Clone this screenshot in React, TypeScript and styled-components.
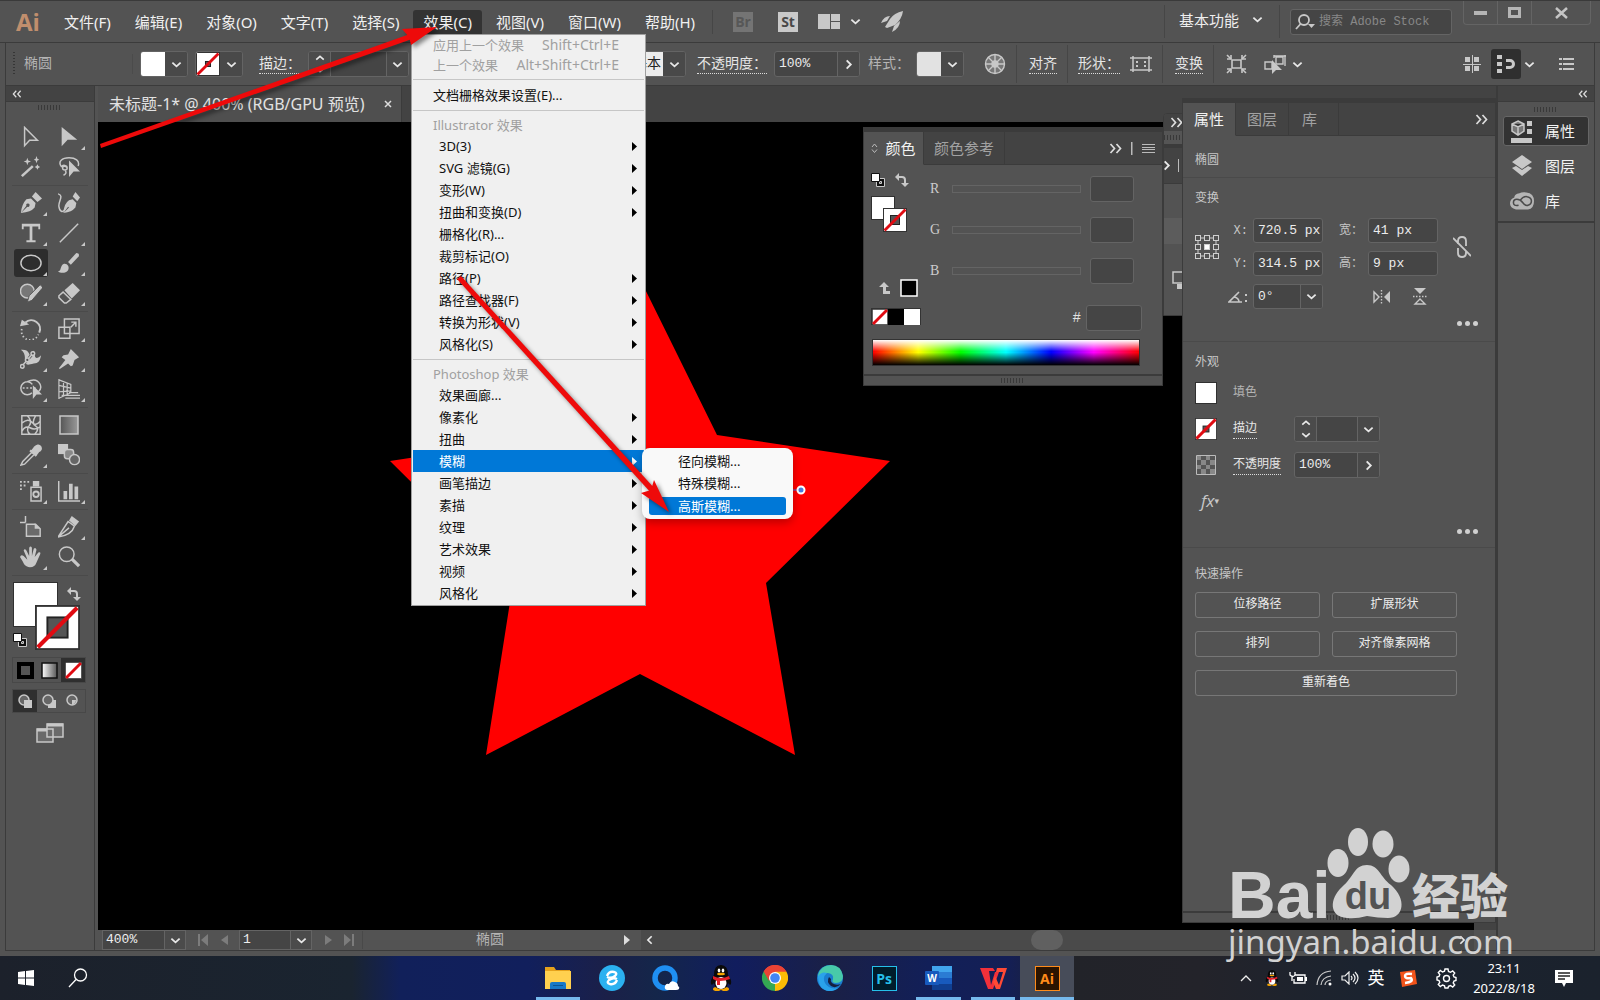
import React from "react";
import styled, { createGlobalStyle, css } from "styled-components";

const ui = `"Noto Sans", "Noto Sans CJK SC", sans-serif`;
const song = `"Liberation Mono", "Noto Sans CJK SC", monospace`;
const c = {
  panel: "#535353",
  dark: "#434343",
  field: "#454545",
  line: "#3b3b3b",
  edge: "#646464",
  icon: "#c8c8c8",
  text: "#e2e2e2",
  dim: "#b4b4b4",
  red: "#e00b12",
};

const Global = createGlobalStyle`
  *, *::before, *::after { box-sizing: border-box; }
  html, body { margin: 0; background: #000; overflow: hidden; }
  button, input, select { font: inherit; color: inherit; margin: 0; padding: 0; border: 0; background: none; border-radius: 0; outline: 0; }
  button { display: inline-flex; align-items: center; justify-content: center; flex: none; }
  svg { display: block; flex: none; }
`;

const Desktop = styled.div`
  position: relative;
  display: flex;
  flex-direction: column;
  height: 100vh;
  overflow: hidden;
  background: ${c.panel};
  color: ${c.text};
  font: 13px/20px ${ui};
`;

/* ---------- shared pieces ---------- */
const Chevron = ({ dir = "down", size = 11 }: { dir?: string; size?: number }) => {
  const d: Record<string, string> = {
    down: "M1.5 4l4.5 4 4.5-4",
    up: "M1.5 8L6 4l4.5 4",
    right: "M4 1.5L8.5 6 4 10.5",
    left: "M8 1.5L3.5 6 8 10.5",
  };
  return (
    <svg width={size} height={size} viewBox="0 0 12 12" fill="none" stroke="#e8e8e8" strokeWidth="2">
      <path d={d[dir]} />
    </svg>
  );
};
const Double = ({ left }: { left?: boolean }) => (
  <svg width={left ? 10 : 13} height={left ? 8 : 11} viewBox="0 0 13 11" fill="none" stroke="#ddd" strokeWidth="1.7">
    <path d={left ? "M5.5 1L1.5 5.500l4 4.500M11.500 1l-4 4.500 4 4.500" : "M1.500 1l4 4.500-4 4.500M7.500 1l4 4.500-4 4.500"} />
  </svg>
);
const Grip = styled.span`
  width: 24px;
  height: 5px;
  background: repeating-linear-gradient(90deg, #393939 0 1px, transparent 1px 3px);
`;
const Rule = styled.span<{ $h?: number }>`
  width: 1px;
  height: ${(p) => p.$h ?? 24}px;
  background: #464646;
  flex: none;
`;
const BarRule = styled(Rule)`
  height: 38px;
  margin-left: 10px;
`;
const Swatch = styled.button<{ $size: number; $fill?: string; $dark?: boolean }>`
  width: ${(p) => p.$size}px;
  height: ${(p) => p.$size}px;
  background: ${(p) => p.$fill ?? "#fff"};
  ${(p) => p.$dark && css`border: 1px solid #303030;`}
`;
const NoneMark = ({ size, hole = 0.25 }: { size: number; hole?: number }) => (
  <svg width={size} height={size} viewBox="0 0 24 24">
    <rect x="0.5" y="0.5" width="23" height="23" fill="#fff" stroke="#333" />
    {hole > 0 && <rect x={12 - 18 * hole} y={12 - 18 * hole} width={36 * hole} height={36 * hole} fill="#555" stroke="#222" />}
    <path d="M1.500 22.500l21-21" stroke={c.red} strokeWidth={Math.max(2.2, 70 / size)} />
  </svg>
);
const SwapIcon = () => (
  <svg width="14" height="14" viewBox="0 0 14 14" fill={c.icon}>
    <path d="M0 4l4-4v3h3q4 0 4 4v3h3l-4 4-4-4h3V7q0-2-2-2H4v3z" />
  </svg>
);
const DefaultIcon = () => (
  <svg width="14" height="14" viewBox="0 0 14 14">
    <path d="M5.500 5.500h8v8h-8z" fill="#111" stroke={c.icon} />
    <path d="M8.500 8.500h2v2h-2z" fill="#555" stroke="#ccc" />
    <path d="M.5.5h8v8h-8z" fill="#fff" stroke="#111" />
  </svg>
);

/* ---------- title bar ---------- */
const TitleBar = styled.header`
  display: flex;
  align-items: center;
  height: 43px;
  padding: 0 9px 0 16px;
  border-top: 1px solid #3a3a3a;
  border-bottom: 1px solid ${c.line};
  flex: none;
`;
const Logo = styled.span`
  width: 38px;
  font: bold 24px/40px "Open Sans", sans-serif;
  color: #c08e6d;
`;
const Menus = styled.nav`
  display: flex;
  gap: 4px;
`;
const MenuButton = styled.button<{ $on?: boolean }>`
  height: 24px;
  padding: 0 10px;
  font-size: 15px;
  color: #f0f0f0;
  border-radius: 3px 3px 0 0;
  background: ${(p) => (p.$on ? "#333" : "none")};
`;
const TopTools = styled.div`
  display: flex;
  align-items: center;
  padding-left: 7px;
`;
const AppBadge = styled.button<{ $dim?: boolean }>`
  width: 20px;
  height: 20px;
  margin-left: ${(p) => (p.$dim ? 20 : 25)}px;
  font: bold 14px/20px "Open Sans", sans-serif;
  background: ${(p) => (p.$dim ? "#747474" : "#c9c9c9")};
  color: ${(p) => (p.$dim ? "#575757" : "#484848")};
`;
const PlainButton = styled.button<{ $ml?: number }>`
  margin-left: ${(p) => p.$ml ?? 0}px;
`;
const TopRight = styled.div`
  display: flex;
  align-items: center;
  align-self: stretch;
  margin-left: auto;
`;
const Workspace = styled.button`
  gap: 13px;
  padding: 0 16px 4px 14px;
  font-size: 15px;
  color: #eee;
`;
const Search = styled.label`
  display: flex;
  align-items: center;
  gap: 4px;
  width: 162px;
  height: 26px;
  margin: 0 11px 0 10px;
  padding-left: 4px;
  background: #454545;
  border: 1px solid ${c.edge};
  border-radius: 3px;
  input { width: 130px; font: 12px/20px ${song}; }
  input::placeholder { color: #888; opacity: 1; }
`;
const WindowButtons = styled.div`
  display: flex;
  align-self: flex-start;
  height: 24px;
  border: 1px solid ${c.edge};
  border-top: 0;
  border-radius: 0 0 4px 4px;
  button { width: 34px; border-right: 1px solid ${c.edge}; }
  button:last-child { width: 58px; border: 0; }
`;

/* ---------- control bar ---------- */
const ControlBar = styled.div`
  display: flex;
  align-items: center;
  height: 43px;
  margin: 0 5px;
  padding: 2px 0 2px 7px;
  border-left: 1px solid ${c.line};
  border-right: 1px solid ${c.line};
  border-bottom: 1px solid ${c.line};
  font: 14px/20px ${song};
  flex: none;
`;
const BarGrip = styled.span`
  width: 2px;
  height: 24px;
  background: repeating-linear-gradient(#363636 0 1px, transparent 1px 3px);
`;
const ControlName = styled.span`
  flex: none;
  width: 118px;
  padding-left: 9px;
  color: ${c.dim};
  border-right: 1px solid #4b4b4b;
`;
const Group = styled.div<{ $ml?: number; $h?: number }>`
  display: flex;
  flex: none;
  align-items: stretch;
  height: ${(p) => p.$h ?? 26}px;
  margin-left: ${(p) => p.$ml ?? 0}px;
  border: 1px solid ${c.edge};
  border-radius: 3px;
  background: ${c.field};
  overflow: hidden;
`;
const DropButton = styled.button<{ $b?: boolean }>`
  width: 22px;
  background: #494949;
  ${(p) => p.$b && css`border-left: 1px solid ${c.edge};`}
`;
const Stepper = styled.span`
  display: flex;
  flex-direction: column;
  width: 22px;
  background: #4b4b4b;
  border-right: 1px solid ${c.edge};
  button { flex: 1; }
`;
const Field = styled.input<{ $w: number }>`
  width: ${(p) => p.$w}px;
  padding-left: 4px;
  font: 13px/20px ${song};
  color: #ececec;
`;
const Label = styled.label<{ $ml?: number; $link?: boolean }>`
  flex: none;
  margin-left: ${(p) => p.$ml ?? 0}px;
  line-height: 18px;
  color: ${(p) => (p.$link ? "#e6e6e6" : c.dim)};
  border-bottom: 1px ${(p) => (p.$link ? "dotted #dcdcdc" : "solid transparent")};
`;
const BrushSelect = styled.select`
  appearance: none;
  width: 248px;
  padding-right: 2px;
  background: #ececec;
  color: #222;
  text-align: right;
  text-align-last: right;
`;
const BarRight = styled.div`
  display: flex;
  align-items: center;
  margin-left: auto;
  padding-right: 20px;
`;
const SnapButton = styled.button`
  width: 30px;
  height: 30px;
  margin: 0 3px 0 10px;
  border-radius: 3px;
  background: #2f2f2f;
`;

/* ---------- main area ---------- */
const Main = styled.main`
  position: relative;
  display: flex;
  flex: 1;
  min-height: 0;
  margin: 0 5px 5px;
  border: 1px solid ${c.line};
  border-top: 0;
`;
const Toolbox = styled.aside`
  width: 89px;
  border-right: 1px solid ${c.line};
  display: flex;
  flex-direction: column;
  flex: none;
`;
const PanelHead = styled.div<{ $right?: boolean }>`
  display: flex;
  align-items: center;
  justify-content: ${(p) => (p.$right ? "flex-end" : "flex-start")};
  height: 16px;
  padding: 0 6px;
  background: ${c.dark};
  border-bottom: 1px solid ${c.line};
`;
const GripRow = styled.div<{ $h: number }>`
  display: flex;
  align-items: center;
  justify-content: center;
  height: ${(p) => p.$h}px;
`;
const DockGrip = styled(GripRow)`
  width: 96px;
`;
const ToolGroup = styled.div`
  display: grid;
  grid-template-columns: 38px 38px;
  grid-auto-rows: 30px;
  margin: 0 6px 2px;
  padding-bottom: 3px;
  border-bottom: 1px solid #4a4a4a;
`;
const Tool = styled.button<{ $on?: boolean; $more?: boolean }>`
  position: relative;
  margin: 1px 2px;
  border-radius: 3px;
  background: ${(p) => (p.$on ? "#2d2d2d" : "none")};
  ${(p) => p.$more && css`
    &::after {
      content: "";
      position: absolute;
      right: 1px;
      bottom: 1px;
      border-left: 4px solid transparent;
      border-bottom: 4px solid ${c.icon};
    }
  `}
`;
const FillStroke = styled.div`
  display: grid;
  grid-template-columns: 22px 22px 24px;
  grid-template-rows: 23px 23px 23px;
  margin: 4px 7px 6px;
  > .fill { grid-area: 1 / 1 / 3 / 3; }
  > .stroke { grid-area: 2 / 2 / 4 / 4; z-index: 1; place-self: start; }
  > .swap { grid-area: 1 / 3; place-self: center end; }
  > .mini { grid-area: 3 / 1; place-self: center start; }
`;
const ModeRow = styled.div<{ $h: number }>`
  display: flex;
  height: ${(p) => p.$h}px;
  width: 74px;
  margin: 0 0 6px 6px;
  border: 1px solid #484848;
  button { flex: 1; }
  button[aria-pressed="true"] { background: #2f2f2f; }
`;
const ScreenMode = styled.button`
  margin: 4px 0 0 30px;
  align-self: flex-start;
`;
const Center = styled.section`
  display: flex;
  flex-direction: column;
  flex: 1;
  min-width: 0;
  margin-left: 3px;
  background: ${c.dark};
`;
const Tabs = styled.div`
  display: flex;
  height: 36px;
`;
const DocTab = styled.div`
  display: flex;
  align-items: center;
  gap: 20px;
  width: 304px;
  padding-left: 11px;
  font-size: 16px;
  white-space: nowrap;
  background: #4f4f4f;
  border-right: 1px solid ${c.line};
`;
const Canvas = styled.div`
  flex: 1;
  min-height: 0;
  margin-right: 22px;
  background: #000;
  overflow: hidden;
`;
const Status = styled.footer`
  display: flex;
  align-items: center;
  height: 20px;
  padding-left: 4px;
  background: ${c.panel};
  font: 13px/18px ${song};
`;
const StatusSelect = styled.div<{ $w: number; $ml?: number; $mr: number }>`
  display: flex;
  align-items: center;
  width: ${(p) => p.$w}px;
  height: 20px;
  margin: 0 ${(p) => p.$mr}px 0 ${(p) => p.$ml ?? 0}px;
  background: ${c.field};
  border: 1px solid ${c.edge};
  select { appearance: none; flex: 1; padding-left: 3px; color: #eee; }
  > span { display: flex; width: 21px; height: 18px; align-items: center; justify-content: center; background: #4b4b4b; border-left: 1px solid ${c.edge}; }
`;
const StatusText = styled.span`
  flex: none;
  width: 255px;
  margin-left: 8px;
  border-left: 1px solid #494949;
  text-align: center;
  font-size: 14px;
  color: ${c.dim};
`;
const Scroll = styled.div`
  display: flex;
  align-items: center;
  flex: 1;
  height: 20px;
  margin: 0 22px 0 10px;
  padding: 0 7px 0 4px;
  background: #4a4a4a;
`;
const Thumb = styled.span`
  width: 32px;
  height: 20px;
  margin: 0 auto 0 376px;
  border-radius: 10px;
  background: #606060;
`;
const Dock = styled.aside`
  width: 98px;
  flex: none;
  border-left: 2px solid ${c.line};
`;
const DockItem = styled.button<{ $on?: boolean }>`
  display: flex;
  justify-content: flex-start;
  gap: 11px;
  width: 86px;
  height: 30px;
  margin: 0 0 5px 5px;
  padding-left: 6px;
  font-size: 15px;
  color: #f2f2f2;
  border-radius: 3px;
  border: 1px solid ${(p) => (p.$on ? "#666" : "transparent")};
  background: ${(p) => (p.$on ? "#333" : "none")};
`;
const DockList = styled.div`
  display: flex;
  flex-direction: column;
  align-items: flex-start;
  border-bottom: 2px solid ${c.line};
`;

/* ---------- floating panels ---------- */
const Floating = styled.section<{ $right: number; $top: number; $w: number; $bottom?: number }>`
  position: absolute;
  right: ${(p) => p.$right}px;
  top: ${(p) => p.$top}px;
  width: ${(p) => p.$w}px;
  ${(p) => p.$bottom !== undefined && css`bottom: ${p.$bottom}px;`}
  display: flex;
  flex-direction: column;
  background: ${c.panel};
  border: 1px solid ${c.line};
  border-top: 5px solid ${c.line};
`;
const TabStrip = styled.div`
  display: flex;
  align-items: center;
  height: 33px;
  background: ${c.dark};
  flex: none;
`;
const Tab = styled.button<{ $w: number; $on?: boolean }>`
  gap: 7px;
  width: ${(p) => p.$w}px;
  height: 33px;
  font-size: 15px;
  color: ${(p) => (p.$on ? "#f2f2f2" : "#a2a2a2")};
  background: ${(p) => (p.$on ? c.panel : c.dark)};
  border-right: 1px solid ${c.line};
  border-bottom: 1px solid ${(p) => (p.$on ? c.panel : c.line)};
`;
const LeftTab = styled(Tab)`
  justify-content: flex-start;
  padding-left: 13px;
`;
const TabEnd = styled.div`
  display: flex;
  flex: 1;
  align-self: stretch;
  align-items: center;
  justify-content: flex-end;
  gap: 9px;
  padding-right: 7px;
  border-bottom: 1px solid ${c.line};
`;
const PanelFoot = styled.div`
  display: flex;
  justify-content: center;
  align-items: center;
  height: 11px;
  margin-top: auto;
  border-top: 2px solid ${c.line};
`;
const Section = styled.div<{ $top?: number; $h?: number; $last?: boolean }>`
  padding: ${(p) => p.$top ?? 13}px 10px 0 12px;
  ${(p) => p.$h && css`height: ${p.$h}px;`}
  border-bottom: ${(p) => (p.$last ? 0 : 1)}px solid #4a4a4a;
  font: 12px/16px ${song};
  color: #c6c6c6;
`;
const SectionTitle = styled.h2`
  margin: 0;
  font: 12px/16px ${song};
  color: #c6c6c6;
`;
const TransformGrid = styled.div`
  display: grid;
  grid-template-columns: 24px 34px 70px 45px 70px 1fr;
  grid-template-rows: 25px 25px 25px;
  gap: 8px 0;
  align-items: center;
  margin: 11px 0 2px;
  > .ref { grid-area: 1 / 1 / 3 / 2; }
  > .chain { grid-area: 1 / 6 / 3 / 7; justify-self: center; }
  > label { justify-self: end; padding-right: 5px; white-space: nowrap; }
`;
const Flips = styled.div`
  display: flex;
  justify-content: space-between;
  padding: 0 11px 0 5px;
`;
const More = styled.button`
  display: flex;
  gap: 3px;
  margin-left: auto;
  padding: 0 7px 0 0;
  height: 24px;
  i { width: 5px; height: 5px; border-radius: 50%; background: #d0d0d0; }
`;
const LookRows = styled.div`
  padding-top: 4px;
`;
const LookRow = styled.div`
  display: grid;
  grid-template-columns: 38px 61px 86px;
  align-items: center;
  justify-items: start;
  height: 36px;
`;
const FxButton = styled.button`
  padding-left: 6px;
  font: italic 17px/20px "Open Sans", sans-serif;
  color: ${c.icon};
  small { font: 9px/20px "DejaVu Sans", sans-serif; align-self: flex-end; }
`;
const Quick = styled.div`
  display: grid;
  grid-template-columns: 125px 125px;
  gap: 13px 12px;
  margin-top: 9px;
`;
const QuickButton = styled.button<{ $wide?: boolean }>`
  height: 26px;
  grid-column: span ${(p) => (p.$wide ? 2 : 1)};
  border: 1px solid #777;
  border-radius: 3px;
  color: #ececec;
`;
const ColorBody = styled.div`
  display: flex;
  height: 165px;
`;
const ColorLeft = styled.div`
  display: flex;
  flex-direction: column;
  width: 57px;
  padding: 8px 0 0 7px;
`;
const ColorIcons = styled.div`
  display: flex;
  justify-content: space-between;
  width: 38px;
  margin-bottom: 9px;
`;
const MiniPair = styled.div`
  display: grid;
  grid-template-columns: 12px 12px 12px;
  grid-template-rows: 12px 12px 12px;
  > :first-child { grid-area: 1 / 1 / 3 / 3; }
  > :last-child { grid-area: 2 / 2 / 4 / 4; z-index: 1; }
`;
const LastColor = styled.div`
  display: flex;
  align-items: center;
  gap: 10px;
  margin: 47px 0 11px 8px;
`;
const Strip = styled.div`
  display: flex;
  width: 50px;
  height: 17px;
  border: 1px solid #333;
  align-items: center;
`;
const Channels = styled.div`
  flex: 1;
  padding-top: 3px;
`;
const Channel = styled.div`
  display: flex;
  align-items: center;
  height: 41px;
  padding-left: 9px;
  label { width: 22px; font: 14px/20px "Liberation Serif", serif; color: #ccc; }
  input[type="range"] { appearance: none; width: 129px; height: 8px; margin-right: 9px; border: 1px solid ${c.edge}; }
  input[type="range"]::-webkit-slider-thumb { appearance: none; width: 0; }
`;
const HexRow = styled.div`
  display: flex;
  align-items: center;
  justify-content: flex-end;
  gap: 5px;
  height: 41px;
  margin-top: 6px;
  padding-right: 20px;
  font: 14px/20px ${song};
`;
const Spectrum = styled.button`
  width: 268px;
  height: 27px;
  margin: 9px 0 8px 8px;
  border: 1px solid #333;
  background:
    linear-gradient(#fff 0%, rgba(255, 255, 255, 0) 45%, rgba(0, 0, 0, 0) 50%, #000 100%),
    linear-gradient(90deg, #f00, #ff0 17%, #0f0 33%, #0ff 50%, #00f 67%, #f0f 83%, #f00);
`;
const Sliver = styled.div`
  position: absolute;
  right: 410px;
  top: 27px;
  width: 21px;
  height: 203px;
  display: flex;
  flex-direction: column;
  overflow: hidden;
  background: ${c.panel};
  border: 1px solid ${c.line};
  border-radius: 4px 0 0 0;
`;
const SliverPart = styled.div<{ $h: number; $bg: string; $b?: number }>`
  display: flex;
  align-items: center;
  justify-content: flex-end;
  gap: 6px;
  height: ${(p) => p.$h}px;
  background: ${(p) => p.$bg};
  border-bottom: ${(p) => p.$b ?? 0}px solid ${c.line};
  flex: none;
`;

/* ---------- menus ---------- */
const Dropdown = styled.div`
  position: absolute;
  left: 411px;
  top: 34px;
  width: 235px;
  padding: 0 1px 1px;
  background: #f0f0f0;
  border: 1px solid #a0a0a0;
  color: #111;
  white-space: nowrap;
`;
const Item = styled.button<{ $h?: number; $pad?: number; $off?: boolean; $on?: boolean }>`
  display: flex;
  justify-content: flex-start;
  width: 100%;
  height: ${(p) => p.$h ?? 22}px;
  padding: 0 7px 0 ${(p) => p.$pad ?? 26}px;
  color: ${(p) => (p.$on ? "#fff" : p.$off ? "#a0a0a0" : "#111")};
  background: ${(p) => (p.$on ? "#0078d7" : "none")};
  svg { margin-left: auto; }
  kbd { margin-left: auto; padding-right: 18px; font: 14px/20px ${ui}; }
`;
const Sep = styled.div`
  height: 9px;
  padding: 4px 0;
  background: #c6c6c6 content-box;
`;
const Sub = styled.div`
  position: absolute;
  left: 642px;
  top: 448px;
  width: 151px;
  padding: 2px 7px 4px;
  background: #f9f9f9;
  border-radius: 8px;
  box-shadow: 0 4px 8px rgba(0, 0, 0, 0.25);
  color: #111;
`;
const SubItem = styled.button<{ $on?: boolean }>`
  display: flex;
  justify-content: flex-start;
  width: 100%;
  height: ${(p) => (p.$on ? 18 : 22)}px;
  margin-top: ${(p) => (p.$on ? 3 : 0)}px;
  padding-left: 29px;
  border-radius: 3px;
  color: ${(p) => (p.$on ? "#fff" : "#111")};
  background: ${(p) => (p.$on ? "#0078d7" : "none")};
`;
const Overlay = styled.svg`
  position: absolute;
  left: 0;
  top: 0;
  pointer-events: none;
`;

/* ---------- taskbar ---------- */
const Taskbar = styled.footer`
  display: flex;
  align-items: center;
  height: 44px;
  flex: none;
  background: linear-gradient(90deg, #1c212b 0%, #1a2430 22%, #11205a 25%, #111f5c 33%, #1b2048 38%, #14264a 41%, #111d5e 46%, #1a2046 52%, #121f58 58%, #141f55 63%, #222329 67%, #23232a 75%, #1b232f 85%, #1b222d 100%);
`;
const TaskButton = styled.button<{ $w?: number; $line?: boolean; $on?: boolean }>`
  width: ${(p) => p.$w ?? 54}px;
  height: 44px;
  background: ${(p) => (p.$on ? "#474c59" : "none")};
  position: relative;
  ${(p) => p.$line && css`
    &::after { content: ""; position: absolute; left: ${p.$on ? 0 : 5}px; right: ${p.$on ? 0 : 5}px; bottom: 0; height: 3px; background: #76b9ed; }
  `}
`;
const Pinned = styled.div`
  display: flex;
  margin-left: 427px;
`;
const AdobeTile = styled.span<{ $c: string; $bg: string }>`
  width: 25px;
  height: 25px;
  border: 1px solid ${(p) => p.$c};
  background: ${(p) => p.$bg};
  color: ${(p) => p.$c};
  font: bold 14px/23px "Open Sans", sans-serif;
`;
const Tray = styled.div`
  display: flex;
  align-items: center;
  margin-left: auto;
  padding-right: 23px;
  height: 44px;
  button { width: 26px; height: 44px; }
`;
const Ime = styled.span`
  font-size: 17px;
  color: #fff;
`;
const Clock = styled.time`
  width: 84px;
  margin-left: 3px;
  text-align: center;
  font: 13px/20px ${ui};
  color: #fff;
`;
const Watermark = styled.div`
  position: absolute;
  right: 84px;
  bottom: 41px;
  width: 288px;
  color: #d2d2d2;
  pointer-events: none;
`;
const MarkRow = styled.div`
  display: flex;
  align-items: flex-end;
  height: 98px;
`;
const MarkBai = styled.strong`
  width: 98px;
  font: bold 66px/60px "Liberation Sans", sans-serif;
`;
const MarkPaw = styled.div`
  display: grid;
  width: 84px;
  padding-bottom: 6px;
  > * { grid-area: 1 / 1; }
  strong { align-self: end; justify-self: center; z-index: 1; color: ${c.panel}; font: bold 38px/46px "Liberation Sans", sans-serif; }
`;
const MarkCjk = styled.strong`
  font: 900 48px/64px "Noto Sans CJK SC", sans-serif;
  padding-left: 2px;
`;
const MarkUrl = styled.div`
  font: 33px/34px "Noto Sans", sans-serif;
  white-space: nowrap;
`;

/* ---------- tool drawings ---------- */
const I = ({ children, size = 24 }: { children: React.ReactNode; size?: number }) => (
  <svg width={size} height={size} viewBox="0 0 24 24" fill="none" stroke={c.icon} strokeWidth="1.6">{children}</svg>
);
const f = { fill: c.icon, stroke: "none" };
const icons: Record<string, React.ReactNode> = {
  select: <path d="M5 1.500v20l5.500-6H19z" />,
  direct: <path d="M4 1v21l6.500-7H21z" {...f} />,
  wand: <><path d="M2 22L14 11" strokeWidth="2.800" /><path d="M8 2l1 3 3 1-3 1-1 3-1-3-3-1 3-1zM18 0l1 3 2 1-2 1-1 3-1-3-2-1 2-1zM19 9l1 2 2 1-2 1-1 2-1-2-2-1 2-1z" {...f} /></>,
  lasso: <><path d="M4 12C-1 6 5 2 12 2s12 3 10 9M4 12c1-3 6-2 6 1s-5 3-5 0c0-3 5-2 5 1M8 16q2 3-2 5" /><path d="M12 5v18l5-6h7z" {...f} /></>,
  pen: <><path d="M1 23q1-10 6-15l5-1 5 5-1 5q-4 5-15 6l7-7a1.800 1.800 0 10-1-1z" {...f} /><path d="M13 5l4-5 7 7-5 4z" {...f} /></>,
  curve: <><path d="M0 2c7 2 0 8 1 14s4 6 6 4" /><path d="M6 23q0-10 6-14l4-1 4 4-1 5q-4 5-13 6l6-6-1-1z" {...f} /><path d="M16 5l3-5 5 6-3 4z" {...f} /></>,
  type: <path d="M2 2h20v6h-2V5h-6.500v15H17v2H7v-2h3.500V5H4v3H2z" {...f} />,
  line: <path d="M2 22L22 2" />,
  ellipse: <ellipse cx="12" cy="12" rx="11" ry="8.500" />,
  brush: <><path d="M11 11L20 1q4 0 2.500 4L14 14z" {...f} /><path d="M0 21c4 0 2-6 6-8 4-1 7 3 5 7-3 4-9 3-11 1z" {...f} /></>,
  blob: <><circle cx="8" cy="10" r="7.500" fill="#777" /><path d="M8 22l2-7L22 3l3 3-12 14z" fill={c.icon} stroke="#535353" strokeWidth="1" /></>,
  eraser: <><path d="M7 9l9-8 8 8-9 9z" {...f} /><path d="M5.500 11L1 15v2l6 6h2l5-4z" /></>,
  rotate: <><path d="M21 16A9.500 9.500 0 006 5" strokeWidth="2.200" /><path d="M0 9l2-7 8 5z" {...f} /><path d="M2 12a9.500 9.500 0 0018 6" strokeDasharray="1.500 2.500" strokeWidth="2" /></>,
  scale: <><path d="M7 1h16v16H7zM1 10h12v12H1z" /><path d="M14 10l5-5M14.500 4.500h5v5" /></>,
  width: <><path d="M1 2c9-1 9 5 11 9 1-4 0-7 3-8 2 2 0 7 3 8 2 0 3-1 5-3-1 6-3 9-8 9-5 1-7 2-9 0C4 14 8 7 1 2z" {...f} /><path d="M2 20L14 6" stroke="#535353" strokeWidth="3" /><path d="M2 20L14 6" /><circle cx="2.500" cy="20" r="2" fill="#535353" /><circle cx="8" cy="13" r="2" fill="#535353" /><circle cx="14" cy="6" r="2" fill="#535353" /></>,
  pin: <path d="M1 22l7-9-4-3 2-2 5-1 3-6 9 9-5 3-2 6-2 1-3-3-9 6z" {...f} />,
  shape: <><path d="M13 16a7 7 0 11.500-9M8 4q10-5 14 3 2 5-2 8" /><path d="M3 11h14" strokeDasharray="2 2" /><path d="M14 8v15l4-5h6z" {...f} /></>,
  persp: <path d="M1 1v22M1 2l13 5v9L1 22M6 4v15M10 6v12M1 8l13 3M1 15l13-1M4 19h20M8 22h16M12 16h10" strokeWidth="1.300" />,
  mesh: <path d="M2 2h20v20H2zM2 10q7-6 11-1t9-1M2 19q4-7 9-4t11-1M8 2q6 6 2 11t1 9M17 2q-5 8 0 11t-1 9" />,
  dropper: <><path d="M13 8l3-4q4-4 6-1t-2 5l-3 4zM11 7l7 6" fill={c.icon} strokeWidth="2.500" /><path d="M13 9L3 19l-2 4 4-1 10-10" /></>,
  blend: <><path d="M0 0h11v11H0z" {...f} /><rect x="7" y="6" width="10" height="10" rx="3" fill="#888" /><circle cx="18" cy="17" r="5.500" fill="#666" /></>,
  spray: <><path d="M12 8h11v15H12z" /><circle cx="17.500" cy="15.500" r="3" strokeWidth="2" /><path d="M14 1h7v6h-7zM0 1h2v2H0zM4 1h2v2H4zM8 1h2v2H8zM0 5h2v2H0zM4 5h2v2H4zM0 9h2v2H0z" {...f} /></>,
  graph: <><path d="M.800 1v22H24" /><path d="M6 12h4v9H6zM12 4h4v17h-4zM18 7h4v14h-4z" {...f} /></>,
  artboard: <><path d="M6 0v7M-1 7h7" /><path d="M7 9h10l5 5v8H7z" fill="#6a6a6a" /><path d="M16 8v6h6z" {...f} /></>,
  slice: <><path d="M0 23L11 6l7 5q-3 10-18 12zM0 23l12-10" /><path d="M12 5l3-5 8 6-4 5z" {...f} /></>,
  hand: <path d="M7 12L4 5q1-3 3 0l3 6V2q1.500-3 3 0v9l2-8q2-2 3 1l-2 8 4-5q3-1 2 2l-4 9q-2 6-9 5-4-1-6-6L0 12q1-3 4-1l4 4z" {...f} />,
  zoom: <><circle cx="9.500" cy="9" r="8" /><path d="M15 14l8 8" strokeWidth="3.500" /></>,
};
const toolGroups: [string, string, boolean][][] = [
  [["select", "选择", false], ["direct", "直接选择", true], ["wand", "魔棒", false], ["lasso", "套索", false]],
  [["pen", "钢笔", true], ["curve", "曲率", false], ["type", "文字", true], ["line", "直线段", true], ["ellipse", "椭圆", true], ["brush", "画笔", true], ["blob", "斑点画笔", true], ["eraser", "橡皮擦", true]],
  [["rotate", "旋转", true], ["scale", "比例缩放", true], ["width", "宽度", true], ["pin", "操控变形", true], ["shape", "形状生成器", true], ["persp", "透视网格", true]],
  [["mesh", "网格", false], ["", "渐变", false], ["dropper", "吸管", true], ["blend", "混合", false]],
  [["spray", "符号喷枪", true], ["graph", "柱形图", true]],
  [["artboard", "画板", false], ["slice", "切片", true], ["hand", "抓手", true], ["zoom", "缩放", false]],
];
const GradientBox = ({ w, h }: { w: number; h: number }) => (
  <svg width={w} height={h}>
    <defs><linearGradient id={`g${w}`}><stop stopColor={w < 20 ? "#fff" : "#555"} /><stop offset="1" stopColor={w < 20 ? "#555" : "#999"} /></linearGradient></defs>
    <rect x="1" y="1" width={w - 2} height={h - 2} fill={`url(#g${w})`} stroke={w < 20 ? "#111" : c.icon} strokeWidth="1.5" />
  </svg>
);

const menus = ["文件(F)", "编辑(E)", "对象(O)", "文字(T)", "选择(S)", "效果(C)", "视图(V)", "窗口(W)", "帮助(H)"];
const aiItems: [string, boolean][] = [["3D(3)", true], ["SVG 滤镜(G)", true], ["变形(W)", true], ["扭曲和变换(D)", true], ["栅格化(R)...", false], ["裁剪标记(O)", false], ["路径(P)", true], ["路径查找器(F)", true], ["转换为形状(V)", true], ["风格化(S)", true]];
const psItems: [string, boolean][] = [["效果画廊...", false], ["像素化", true], ["扭曲", true], ["模糊", true], ["画笔描边", true], ["素描", true], ["纹理", true], ["艺术效果", true], ["视频", true], ["风格化", true]];
const MenuRow = ({ item, on }: { item: [string, boolean]; on?: boolean }) => (
  <Item $on={on}>
    {item[0]}
    {item[1] && <svg width="5" height="9" viewBox="0 0 5 9" fill={on ? "#fff" : "#000"}><path d="M0 0l5 4.500L0 9z" /></svg>}
  </Item>
);

const Penguin = ({ size }: { size: number }) => (
  <svg width={size} height={size} viewBox="0 0 26 26">
    <ellipse cx="9" cy="24" rx="4" ry="2" fill="#f5a400" /><ellipse cx="17" cy="24" rx="4" ry="2" fill="#f5a400" />
    <path d="M6 10Q6 0 13 0t7 10q4 5 3 9-1 2-3-1-1 6-7 6t-7-6q-2 3-3 1-1-4 3-9z" fill="#0a0a0a" />
    <ellipse cx="13" cy="18" rx="5.500" ry="6" fill="#fff" />
    <ellipse cx="11" cy="5.500" rx="1.300" ry="2" fill="#fff" /><ellipse cx="15" cy="5.500" rx="1.300" ry="2" fill="#fff" />
    <ellipse cx="13" cy="9" rx="4" ry="1.300" fill="#f5a400" />
    <path d="M5 11q8 4 16 0l1 3q-5 2-10 2v4H9v-4l-4-2z" fill="#e3202a" />
  </svg>
);

function TopBar() {
  return (
    <TitleBar>
      <Logo>Ai</Logo>
      <Menus>{menus.map((m, i) => <MenuButton key={m} $on={i === 5}>{m}</MenuButton>)}</Menus>
      <TopTools>
        <Rule />
        <AppBadge $dim>Br</AppBadge>
        <AppBadge>St</AppBadge>
        <PlainButton $ml={20} aria-label="排列文档">
          <svg width="22" height="15" fill={c.icon}><path d="M0 0h12v15H0zM13 0h9v7h-9zM13 8h9v7h-9z" /></svg>
        </PlainButton>
        <PlainButton $ml={10} aria-label="排列选项"><Chevron /></PlainButton>
        <PlainButton $ml={20} aria-label="GPU 性能">
          <svg width="22" height="21" viewBox="0 0 22 21" fill={c.icon}><path d="M22 0Q13 2 9 8L4 16l2 1 8-3Q21 8 22 0zM9 5Q3 5 0 12l6-2zM19 10l-6 5-2 6q8-4 8-11z" /></svg>
        </PlainButton>
      </TopTools>
      <TopRight>
        <Rule $h={33} />
        <Workspace>基本功能 <Chevron /></Workspace>
        <Rule $h={33} />
        <Search>
          <svg width="20" height="16" viewBox="0 0 20 16" fill="none" stroke={c.icon} strokeWidth="1.8"><circle cx="9" cy="6" r="5" /><path d="M5.500 10L1 15" /><path d="M13 10h7l-3.500 4z" {...f} /></svg>
          <input type="text" placeholder="搜索 Adobe Stock" aria-label="搜索 Adobe Stock" />
        </Search>
        <WindowButtons>
          <button aria-label="最小化"><svg width="13" height="4"><path d="M0 0h13v4H0z" fill="#b5b5b5" /></svg></button>
          <button aria-label="最大化"><svg width="13" height="11"><path d="M1.500 1.500h10v8h-10z" fill="none" stroke="#b5b5b5" strokeWidth="3" /></svg></button>
          <button aria-label="关闭"><svg width="13" height="12"><path d="M1 1l11 10M12 1L1 11" stroke="#c4c4c4" strokeWidth="2.5" /></svg></button>
        </WindowButtons>
      </TopRight>
    </TitleBar>
  );
}

function Controls() {
  return (
    <ControlBar>
      <BarGrip />
      <ControlName>椭圆</ControlName>
      <Group $ml={7}><Swatch $size={24} aria-label="填色" /><DropButton aria-label="填色选项"><Chevron /></DropButton></Group>
      <Group $ml={7}><Swatch $size={24} aria-label="描边颜色"><NoneMark size={24} hole={0.14} /></Swatch><DropButton aria-label="描边选项"><Chevron /></DropButton></Group>
      <Label $ml={16} $link htmlFor="weight">描边：</Label>
      <Group $ml={7}>
        <Stepper><button aria-label="增加"><Chevron dir="up" size={10} /></button><button aria-label="减少"><Chevron size={10} /></button></Stepper>
        <Field $w={55} id="weight" /><DropButton $b aria-label="粗细"><Chevron /></DropButton>
      </Group>
      <Group $ml={5}>
        <BrushSelect aria-label="画笔定义"><option>基本</option></BrushSelect>
        <DropButton aria-label="画笔选项"><Chevron /></DropButton>
      </Group>
      <Label $ml={11} $link htmlFor="opacity">不透明度：</Label>
      <Group $ml={7}><Field $w={62} id="opacity" defaultValue="100%" /><DropButton $b aria-label="不透明度选项"><Chevron dir="right" /></DropButton></Group>
      <Label $ml={8}>样式：</Label>
      <Group $ml={6}><Swatch $size={24} $fill="#e2e2e2" aria-label="样式" /><DropButton aria-label="样式选项"><Chevron /></DropButton></Group>
      <PlainButton $ml={20} aria-label="重新着色图稿">
        <svg width="22" height="22" viewBox="0 0 22 22" fill="#777" stroke={c.icon} strokeWidth="1.4"><circle cx="11" cy="11" r="9.5" /><path d="M11 1.500v19M1.500 11h19M4 4l14 14M18 4L4 18" /><circle cx="11" cy="11" r="3" fill={c.icon} /></svg>
      </PlainButton>
      <BarRule />
      <Label $ml={12} $link>对齐</Label>
      <BarRule />
      <Label $ml={10} $link>形状：</Label>
      <PlainButton $ml={10} aria-label="形状选项">
        <svg width="22" height="18" viewBox="0 0 22 18" fill="none" stroke={c.icon} strokeWidth="1.5"><path d="M3 1v16M19 1v16M0 3h22M0 15h22" /><path d="M6 6h2v2H6zM14 6h2v2h-2zM6 10h2v2H6zM14 10h2v2h-2z" {...f} /></svg>
      </PlainButton>
      <BarRule />
      <Label $ml={12} $link>变换</Label>
      <BarRule />
      <PlainButton $ml={12} aria-label="隔离选中的对象">
        <svg width="21" height="20" viewBox="0 0 21 20" fill="none" stroke={c.icon} strokeWidth="1.6"><path d="M6 6h9v8H6zM1 1l4 4M20 1l-4 4M1 19l4-4M20 19l-4-4" /><path d="M1 5h4V1M16 1v4h4M1 15h4v4M20 15h-4v4" /></svg>
      </PlainButton>
      <PlainButton $ml={17} aria-label="选择类似的对象">
        <svg width="22" height="20" viewBox="0 0 22 20" fill="none" stroke={c.icon} strokeWidth="1.4"><path d="M12 3h7v7h-7zM10 1v3M21 1v11M10 2h12M1 8h7v7H1z" /><path d="M8 6v14l4-4h6z" {...f} /></svg>
      </PlainButton>
      <PlainButton $ml={6} aria-label="选择选项"><Chevron /></PlainButton>
      <BarRight>
        <button aria-label="对齐像素"><svg width="18" height="18" fill={c.icon}><path d="M2 2h5v5H2zM11 2h5v5h-5zM2 11h5v5H2zM11 11h5v5h-5zM9 0h1v18H9zM0 9h18v1H0z" /></svg></button>
        <SnapButton aria-label="贴靠"><svg width="18" height="18" viewBox="0 0 18 18" fill={c.icon}><path d="M0 0h5v4H0zM0 7h5v4H0zM0 14h5v4H0zM9 4h4a5 5 0 010 10H9v-3h4a2 2 0 000-4H9z" /></svg></SnapButton>
        <button aria-label="贴靠选项"><Chevron /></button>
        <PlainButton $ml={24} aria-label="更多"><svg width="15" height="12" fill={c.icon}><path d="M0 0h3v2H0zM4 0h11v2H4zM0 5h3v2H0zM4 5h11v2H4zM0 10h3v2H0zM4 10h11v2H4z" /></svg></PlainButton>
      </BarRight>
    </ControlBar>
  );
}

function Tools() {
  return (
    <Toolbox>
      <PanelHead><Double left /></PanelHead>
      <GripRow $h={10}><Grip /></GripRow>
      <GripRow $h={10} />
      {toolGroups.map((g, i) => (
        <ToolGroup key={i}>
          {g.map(([k, name, more]) => (
            <Tool key={name} $on={k === "ellipse"} $more={more} aria-label={name}>
              {k ? <I size={22}>{icons[k]}</I> : <GradientBox w={20} h={20} />}
            </Tool>
          ))}
        </ToolGroup>
      ))}
      <FillStroke>
        <Swatch className="fill" $size={45} $dark aria-label="填色" />
        <Swatch className="stroke" $size={45} aria-label="描边"><NoneMark size={45} hole={0.3} /></Swatch>
        <button className="swap" aria-label="互换填色和描边"><SwapIcon /></button>
        <button className="mini" aria-label="默认填色和描边"><DefaultIcon /></button>
      </FillStroke>
      <ModeRow $h={26}>
        <button aria-label="颜色"><svg width="17" height="17"><path d="M2 2h13v13H2z" fill="#555" stroke="#000" strokeWidth="4" /></svg></button>
        <button aria-label="渐变"><GradientBox w={17} h={17} /></button>
        <button aria-label="无" aria-pressed="true"><NoneMark size={17} hole={0} /></button>
      </ModeRow>
      <ModeRow $h={24}>
        {[0, 1, 2].map((n) => (
          <button key={n} aria-label={["正常绘图", "背面绘图", "内部绘图"][n]} aria-pressed={n === 0}>
            <svg width="14" height="14" viewBox="0 0 14 14">
              {n === 1 && <path d="M6 6h8v8H6z" fill={c.icon} />}
              <circle cx="6" cy="6" r="5" fill="#666" stroke={c.icon} strokeWidth="1.5" />
              {n === 0 && <path d="M6 6h8v8H6z" fill={c.icon} />}
              {n === 2 && <path d="M6 6h4q0 3-4 5z" fill={c.icon} />}
            </svg>
          </button>
        ))}
      </ModeRow>
      <ScreenMode aria-label="屏幕模式">
        <svg width="28" height="20" viewBox="0 0 28 20" fill="#6a6a6a" stroke={c.icon} strokeWidth="1.5"><path d="M1 6h16v13H1zM11 1h16v13H11z" /><path d="M11 2h16M1 7h10" strokeWidth="3" /></svg>
      </ScreenMode>
    </Toolbox>
  );
}

function Artwork() {
  return (
    <Center>
      <Tabs><DocTab>未标题-1* @ 400% (RGB/GPU 预览)<button aria-label="关闭文档"><svg width="8" height="8"><path d="M1 1l6 6M7 1L1 7" stroke="#ddd" strokeWidth="1.5" /></svg></button></DocTab></Tabs>
      <Canvas>
        <svg width="1376" height="808" viewBox="98 122 1376 808">
          <path fill="#f00" d="M640 279l77 156 173 26-124 122 29 172-155-81-154 81 27-172-123-122 172-26z" />
          <path d="M793 490h6" stroke="#4a6be0" />
          <circle cx="801" cy="490" r="3.5" fill="#4a7be0" stroke="#fff" strokeWidth="2" />
        </svg>
      </Canvas>
      <Status>
        <StatusSelect $w={84} $mr={12}><select aria-label="缩放级别"><option>400%</option></select><span><Chevron /></span></StatusSelect>
        <button aria-label="首项"><svg width="10" height="12" fill="#7c7c7c"><path d="M0 0h2v12H0zM10 0v12L3 6z" /></svg></button>
        <PlainButton $ml={13} aria-label="上一项"><svg width="7" height="10" fill="#7c7c7c"><path d="M7 0v10L0 5z" /></svg></PlainButton>
        <StatusSelect $w={73} $ml={11} $mr={13}><select aria-label="画板导航"><option>1</option></select><span><Chevron /></span></StatusSelect>
        <button aria-label="下一项"><svg width="7" height="10" fill="#7c7c7c"><path d="M0 0v10l7-5z" /></svg></button>
        <PlainButton $ml={12} aria-label="末项"><svg width="10" height="12" fill="#7c7c7c"><path d="M8 0h2v12H8zM0 0v12l7-6z" /></svg></PlainButton>
        <StatusText>椭圆</StatusText>
        <PlainButton $ml={7} aria-label="状态选项"><svg width="7" height="10" fill="#ddd"><path d="M0 0v10l6-5z" /></svg></PlainButton>
        <Scroll><Chevron dir="left" size={10} /><Thumb /><Chevron dir="right" size={10} /></Scroll>
      </Status>
    </Center>
  );
}

function RightDock() {
  return (
    <Dock>
      <PanelHead $right><Double left /></PanelHead>
      <DockList>
        <DockGrip $h={14}><Grip /></DockGrip>
        <DockItem $on>
          <svg width="24" height="24" viewBox="0 0 24 24" fill="none" stroke={c.icon} strokeWidth="1.5"><path d="M8 2l6 3v7l-6 4-6-4V5zM2 5l6 3 6-3M8 8v8" fill="#777" /><path d="M17 2h5v5h-5zM17 10h5v5h-5zM1 19h21v5H1z" {...f} /></svg>
          属性
        </DockItem>
        <DockItem>
          <svg width="24" height="24" viewBox="0 0 24 24" fill={c.icon}><path d="M12 1l10 7-10 7L2 8zM2 14l4-2 6 4 6-4 4 2-10 8z" /></svg>
          图层
        </DockItem>
        <DockItem>
          <svg width="24" height="20" viewBox="0 0 28 20"><path d="M11 1Q5 2 5 6 0 8 0 13t7 7h14q7-1 7-10T19 0q-5-1-8 1z" fill="#b5b5b5" /><path d="M10 15q-6 1-6-3t4-4 7 4q3 4 6 3 4-1 4-5t-5-5q-4-1-8 4" fill="none" stroke="#4b4b4b" strokeWidth="1.8" /></svg>
          库
        </DockItem>
      </DockList>
    </Dock>
  );
}

function ColorPanel() {
  return (
    <Floating $right={431} $top={41} $w={300}>
      <TabStrip>
        <Tab $w={60} $on>
          <svg width="7" height="12" fill="none" stroke="#bbb"><path d="M1 5l2.500-3L6 5M1 7.500l2.500 3L6 7.500" /></svg>
          颜色
        </Tab>
        <Tab $w={81}>颜色参考</Tab>
        <TabEnd><Double /><svg width="2" height="13"><path d="M0 0h1.500v13H0z" fill="#bbb" /></svg><svg width="13" height="9" fill="#bbb"><path d="M0 0h13v1H0zM0 3h13v1H0zM0 5h13v1H0zM0 8h13v1H0z" /></svg></TabEnd>
      </TabStrip>
      <ColorBody>
        <ColorLeft>
          <ColorIcons><DefaultIcon /><SwapIcon /></ColorIcons>
          <MiniPair><Swatch $size={24} $dark aria-label="填色" /><Swatch $size={24} aria-label="描边"><NoneMark size={24} hole={0.25} /></Swatch></MiniPair>
          <LastColor>
            <svg width="11" height="12" fill={c.icon}><path d="M5 0l5 5H7v4h4v3H4V5H0z" /></svg>
            <svg width="18" height="18"><path d="M1 1h16v16H1z" fill="#000" stroke="#fff" strokeWidth="1.5" /></svg>
          </LastColor>
          <Strip><NoneMark size={16} hole={0} /><Swatch $size={16} $fill="#000" aria-label="黑色" /><Swatch $size={16} aria-label="白色" /></Strip>
        </ColorLeft>
        <Channels>
          {["R", "G", "B"].map((n) => (
            <Channel key={n}>
              <label htmlFor={`ch${n}`}>{n}</label>
              <input type="range" aria-label={n} />
              <Group $h={26}><Field $w={42} id={`ch${n}`} /></Group>
            </Channel>
          ))}
          <HexRow><label htmlFor="hex">#</label><Group $h={26}><Field $w={54} id="hex" /></Group></HexRow>
        </Channels>
      </ColorBody>
      <Spectrum aria-label="色谱" />
      <PanelFoot><Grip /></PanelFoot>
    </Floating>
  );
}

function Properties() {
  return (
    <Floating $right={98} $top={12} $w={314} $bottom={27}>
      <TabStrip>
        <Tab $w={53} $on>属性</Tab>
        <Tab $w={53}>图层</Tab>
        <LeftTab $w={50}>库</LeftTab>
        <TabEnd><Double /></TabEnd>
      </TabStrip>
      <Section $top={17} $h={42}>椭圆</Section>
      <Section $h={164}>
        <SectionTitle>变换</SectionTitle>
        <TransformGrid>
          <svg className="ref" width="24" height="24" viewBox="0 0 24 24" fill="none" stroke="#d0d0d0"><path d="M3 3h18v18H3z" />{[0, 9, 18].map((x) => [0, 9, 18].map((y) => <rect key={`${x}-${y}`} x={x + 0.5} y={y + 0.5} width="5" height="5" fill={x === 9 && y === 9 ? "#fff" : c.panel} />))}</svg>
          <label htmlFor="px">X:</label><Group $h={25}><Field $w={68} id="px" defaultValue="720.5 px" /></Group>
          <label htmlFor="pw">宽：</label><Group $h={25}><Field $w={68} id="pw" defaultValue="41 px" /></Group>
          <button className="chain" aria-label="约束宽度和高度比例"><svg width="18" height="22" viewBox="0 0 18 22" fill="none" stroke={c.icon} strokeWidth="1.8"><path d="M5 8V5q0-4 4-4t4 4v5M5 12v5q0 4 4 4t4-4v-2M0 2l18 18" /></svg></button>
          <label htmlFor="py">Y:</label><Group $h={25}><Field $w={68} id="py" defaultValue="314.5 px" /></Group>
          <label htmlFor="ph">高：</label><Group $h={25}><Field $w={68} id="ph" defaultValue="9 px" /></Group>
          <span />
          <label htmlFor="pa" aria-label="旋转"><svg width="20" height="12" viewBox="0 0 20 12" fill="none" stroke={c.icon} strokeWidth="1.6"><path d="M14 11H1L11 1M6 6q5 1 5 5" /><path d="M17 3h2v2h-2zM17 9h2v2h-2z" {...f} /></svg></label>
          <Group $h={25}><Field $w={46} id="pa" defaultValue="0°" /><DropButton $b aria-label="角度选项"><Chevron /></DropButton></Group>
          <span />
          <Flips>
            <button aria-label="水平翻转"><svg width="17" height="14" viewBox="0 0 17 14" fill="none" stroke={c.icon} strokeWidth="1.4"><path d="M1 2v10l5-5z" /><path d="M8.500 0v14" strokeDasharray="1.5 1.5" /><path d="M17 1v12l-6-6z" {...f} /></svg></button>
            <button aria-label="垂直翻转"><svg width="14" height="17" viewBox="0 0 14 17" fill="none" stroke={c.icon} strokeWidth="1.4"><path d="M2 16h10l-5-5z" /><path d="M0 8.500h14" strokeDasharray="1.5 1.5" /><path d="M1 0h12L7 6z" {...f} /></svg></button>
          </Flips>
        </TransformGrid>
        <More aria-label="更多选项"><i /><i /><i /></More>
      </Section>
      <Section $h={206}>
        <SectionTitle>外观</SectionTitle>
        <LookRows>
          <LookRow><Swatch $size={22} $dark aria-label="填色" /><Label>填色</Label></LookRow>
          <LookRow>
            <Swatch $size={22} aria-label="描边"><NoneMark size={22} hole={0.18} /></Swatch><Label $link htmlFor="sw">描边</Label>
            <Group><Stepper><button aria-label="增加"><Chevron dir="up" size={10} /></button><button aria-label="减少"><Chevron size={10} /></button></Stepper><Field $w={40} id="sw" /><DropButton $b aria-label="粗细"><Chevron /></DropButton></Group>
          </LookRow>
          <LookRow>
            <svg width="22" height="22"><path d="M1.500 1.500h19v19h-19z" fill="#555" stroke="#bbb" /><path d="M2 2h4v4H2zM11 2h4v4h-4zM6 6h5v5H6zM15 6h5v5h-5zM2 11h4v4H2zM11 11h4v4h-4zM6 15h5v5H6zM15 15h5v5h-5z" fill="#888" /></svg>
            <Label $link htmlFor="po">不透明度</Label>
            <Group><Field $w={62} id="po" defaultValue="100%" /><DropButton $b aria-label="不透明度选项"><Chevron dir="right" /></DropButton></Group>
          </LookRow>
          <LookRow><FxButton aria-label="选取效果">fx<small>▾</small></FxButton></LookRow>
        </LookRows>
        <More aria-label="更多选项"><i /><i /><i /></More>
      </Section>
      <Section $top={19} $last>
        <SectionTitle>快速操作</SectionTitle>
        <Quick>
          <QuickButton>位移路径</QuickButton><QuickButton>扩展形状</QuickButton>
          <QuickButton>排列</QuickButton><QuickButton>对齐像素网格</QuickButton>
          <QuickButton $wide>重新着色</QuickButton>
        </Quick>
      </Section>
      <PanelFoot><Grip /></PanelFoot>
    </Floating>
  );
}

function Windows() {
  return (
    <Taskbar>
      <TaskButton $w={52} aria-label="开始"><svg width="16" height="16" fill="#fff"><path d="M0 2l7-1v6.500H0zM8 1l8-1v7.500H8zM0 8.500h7V15l-7-1zM8 8.500h8V16l-8-1z" /></svg></TaskButton>
      <TaskButton $w={52} aria-label="搜索"><svg width="20" height="20" fill="none" stroke="#fff" strokeWidth="1.3"><circle cx="12.5" cy="7" r="6" /><path d="M8 11.500L1 19" /></svg></TaskButton>
      <Pinned>
        <TaskButton $line aria-label="文件资源管理器"><svg width="28" height="24" viewBox="0 0 28 24"><path d="M1 1h9l2 3h14v19H1z" fill="#e6a21c" /><path d="M1 5h26v18H1z" fill="#ffd04f" /><path d="M6 23v-5q0-2 2-2h12q2 0 2 2v5z" fill="#1778c8" /><path d="M9 19h10v1H9z" fill="#0c5492" /></svg></TaskButton>
        <TaskButton aria-label="浏览器"><svg width="26" height="26" viewBox="0 0 26 26"><circle cx="13" cy="13" r="13" fill="#2bb1f0" /><path d="M8 12q4 2 8-1 3-3-1-4-5-1-7 4M18 14q-4-2-8 1-3 3 1 4 5 1 7-4" fill="none" stroke="#fff" strokeWidth="2.4" /></svg></TaskButton>
        <TaskButton aria-label="QQ 浏览器"><svg width="28" height="26" viewBox="0 0 28 26"><circle cx="13" cy="13" r="10" fill="none" stroke="#1f8ff2" strokeWidth="5.5" /><path d="M15 25q-3-1-2-4t4-2q2-4 6-2 3 1 3 4 2 1 1 3-1 1-3 1z" fill="#fff" /></svg></TaskButton>
        <TaskButton $w={55} aria-label="QQ"><Penguin size={26} /></TaskButton>
        <TaskButton aria-label="Chrome"><svg width="26" height="26" viewBox="0 0 26 26"><path d="M13 13L1.700 6.500A13 13 0 0124.300 6.500z" fill="#ea4335" /><path d="M13 13l11.300-6.500A13 13 0 0113 26z" fill="#fbbc05" /><path d="M13 13v13A13 13 0 011.700 6.500z" fill="#34a853" /><path d="M13 6.500h11.300L17 17l-4-4z" fill="#fbbc05" /><path d="M13 6.500h11.300A13 13 0 001.700 6.500L7 16z" fill="#ea4335" /><circle cx="13" cy="13" r="6" fill="#fff" /><circle cx="13" cy="13" r="4.8" fill="#4285f4" /></svg></TaskButton>
        <TaskButton $w={55} aria-label="Edge"><svg width="26" height="26" viewBox="0 0 26 26"><circle cx="13" cy="13" r="13" fill="#1b7fd0" /><path d="M1 10Q4 0 14 0t12 11q0 7-7 7-5 0-3-4 1-5-5-6-6 0-10 5z" fill="#48c9a9" /><path d="M1 11q4-5 9-3-5 4-2 10 4 7 13 5-6 5-13 2T1 11z" fill="#2aa2ea" /><path d="M12 12q-3 5 2 9 5 3 10-2-5 2-9-1-2-2-1-4z" fill="#16203f" /></svg></TaskButton>
        <TaskButton aria-label="Photoshop"><AdobeTile $c="#26c0ea" $bg="#001d2b">Ps</AdobeTile></TaskButton>
        <TaskButton $w={55} $line aria-label="Word"><svg width="27" height="24" viewBox="0 0 27 24"><path d="M7 0h20v6H7z" fill="#41a5ee" /><path d="M7 6h20v6H7z" fill="#2b7cd3" /><path d="M7 12h20v6H7z" fill="#185abd" /><path d="M7 18h20v6H7z" fill="#103f91" /><rect y="5" width="14" height="14" rx="1" fill="#185abd" /><text x="7" y="16" fontSize="10" fontWeight="bold" fontFamily="Open Sans" fill="#fff" textAnchor="middle">W</text></svg></TaskButton>
        <TaskButton $line aria-label="WPS"><svg width="27" height="22" viewBox="0 0 27 22"><path d="M0 1h13l2 3H9l2 14 4-13h4L13 22H8z" fill="#f1303a" /><path d="M15 9l4 9 4-13h-7l1-4h10l-7 21h-4l-3-7z" fill="#ff4a35" /></svg></TaskButton>
        <TaskButton $line $on aria-label="Illustrator"><AdobeTile $c="#ff8b1a" $bg="#2b1400">Ai</AdobeTile></TaskButton>
      </Pinned>
      <Tray>
        <button aria-label="显示隐藏的图标"><svg width="12" height="8" fill="none" stroke="#eee" strokeWidth="1.3"><path d="M1 7l5-5 5 5" /></svg></button>
        <button aria-label="QQ"><Penguin size={16} /></button>
        <button aria-label="电池"><svg width="18" height="14" fill="none" stroke="#fff" strokeWidth="1.3"><path d="M6 4h10v8H5V8M1 1v3q3 3 5 0V1M3 6v4" /><path d="M8 6h6v4H8zM16 6h2v4h-2z" fill="#fff" stroke="none" /></svg></button>
        <button aria-label="网络"><svg width="16" height="16" fill="none" stroke="#ccc" strokeWidth="1.2"><path d="M1 15Q2 2 15 1M5 15q1-8 10-9M9 15q0-4 6-5" /><circle cx="14" cy="14" r="1.5" fill="#fff" stroke="none" /></svg></button>
        <button aria-label="音量"><svg width="18" height="14" fill="none" stroke="#eee" strokeWidth="1.2"><path d="M1 5h3l4-4v12L4 9H1zM10 5q2 2 0 4M12 3q4 4 0 8M14 1q6 6 0 12" /></svg></button>
        <button aria-label="输入法"><Ime>英</Ime></button>
        <PlainButton $ml={6} aria-label="搜狗输入法"><svg width="18" height="17" viewBox="0 0 18 17"><path d="M1 2l15-2 2 14-15 3z" fill="#f2541b" /><path d="M13 4Q6 3 6 6t6 2q3 4-6 5" fill="none" stroke="#fff" strokeWidth="2.5" /></svg></PlainButton>
        <PlainButton $ml={12} aria-label="设置"><svg width="21" height="21" viewBox="0 0 21 21" fill="none" stroke="#fff" strokeWidth="1.4"><path d="M9 1h3l.5 2.500 2 .8L16.700 3l2 2-1.500 2 .8 2 2 .5v3l-2 .5-.8 2 1.500 2-2 2-2.200-1.500-2 .8L12 20H9l-.5-2.200-2-.8-2.200 1.500-2-2L3.800 14.500 3 12.500 1 12V9l2-.5.800-2L2.300 4.500l2-2L6.500 4l2-.8z" /><circle cx="10.5" cy="10.5" r="3" /></svg></PlainButton>
        <Clock>23:11<br />2022/8/18</Clock>
        <PlainButton $ml={5} aria-label="通知"><svg width="18" height="17" viewBox="0 0 18 17"><path d="M0 0h18v13h-7l-2 4-2-4H0z" fill="#fff" /><path d="M3 3h12M3 6h12M3 9h7" stroke="#222" strokeWidth="1.3" /></svg></PlainButton>
      </Tray>
    </Taskbar>
  );
}

export default function App() {
  return (
    <Desktop>
      <Global />
      <TopBar />
      <Controls />
      <Main>
        <Tools />
        <Artwork />
        <RightDock />
        <Sliver>
          <SliverPart $h={17} $bg={c.dark}><Double left={false} /></SliverPart>
          <SliverPart $h={17} $bg="#555" $b={4}><Grip /></SliverPart>
          <SliverPart $h={36} $bg={c.dark} $b={1}><Chevron dir="right" /><svg width="5" height="13"><path d="M0 0h1v13H0z" fill="#bbb" /></svg></SliverPart>
          <SliverPart $h={34} $bg={c.panel} />
          <SliverPart $h={26} $bg="#5c5c5c" />
          <SliverPart $h={72} $bg={c.panel}><svg width="11" height="18"><path d="M12 1H1v11h11" fill="none" stroke={c.icon} strokeWidth="1.5" /><path d="M5 13h6v5H5z" fill={c.icon} /></svg></SliverPart>
        </Sliver>
        <ColorPanel />
        <Properties />
      </Main>
      <Windows />
      <Dropdown>
        <Item $h={20} $pad={20} $off>应用上一个效果<kbd>Shift+Ctrl+E</kbd></Item>
        <Item $h={20} $pad={20} $off>上一个效果<kbd>Alt+Shift+Ctrl+E</kbd></Item>
        <Sep />
        <Item $pad={20}>文档栅格效果设置(E)...</Item>
        <Sep />
        <Item $h={20} $pad={20} $off>Illustrator 效果</Item>
        {aiItems.map((i) => <MenuRow key={i[0]} item={i} />)}
        <Sep />
        <Item $h={20} $pad={20} $off>Photoshop 效果</Item>
        {psItems.map((i) => <MenuRow key={i[0]} item={i} on={i[0] === "模糊"} />)}
      </Dropdown>
      <Sub>
        <SubItem>径向模糊...</SubItem>
        <SubItem>特殊模糊...</SubItem>
        <SubItem $on>高斯模糊...</SubItem>
      </Sub>
      <Watermark>
        <MarkRow>
          <MarkBai>Bai</MarkBai>
          <MarkPaw>
            <svg width="84" height="92" viewBox="0 0 84 92" fill="#d2d2d2">
              <ellipse cx="12" cy="36" rx="10.5" ry="14" /><ellipse cx="32" cy="15" rx="10" ry="14" /><ellipse cx="57" cy="17" rx="10.5" ry="13.5" /><ellipse cx="73" cy="42" rx="10.5" ry="13.5" />
              <path d="M41 38c12 0 13 12 24 20 16 14 13 33-3 33q-10 0-21-2-11 3-20 2C3 90 3 72 16 60c12-10 12-22 25-22z" />
            </svg>
            <strong>du</strong>
          </MarkPaw>
          <MarkCjk>经验</MarkCjk>
        </MarkRow>
        <MarkUrl>jingyan.baidu.com</MarkUrl>
      </Watermark>
      <Overlay width="700" height="540" viewBox="0 0 700 540">
        <g fill="#ee0a0a" filter="drop-shadow(3px 3px 2px rgba(0,0,0,.45))">
          <path d="M100 144L410 34l2 5L101 148z" />
          <path d="M437 27l-35 2 7 8 2 8z" />
          <path d="M457 279l4-3 195 214-4 4z" />
          <path d="M669 512l-28-19 10-3 3-10z" />
        </g>
      </Overlay>
    </Desktop>
  );
}
